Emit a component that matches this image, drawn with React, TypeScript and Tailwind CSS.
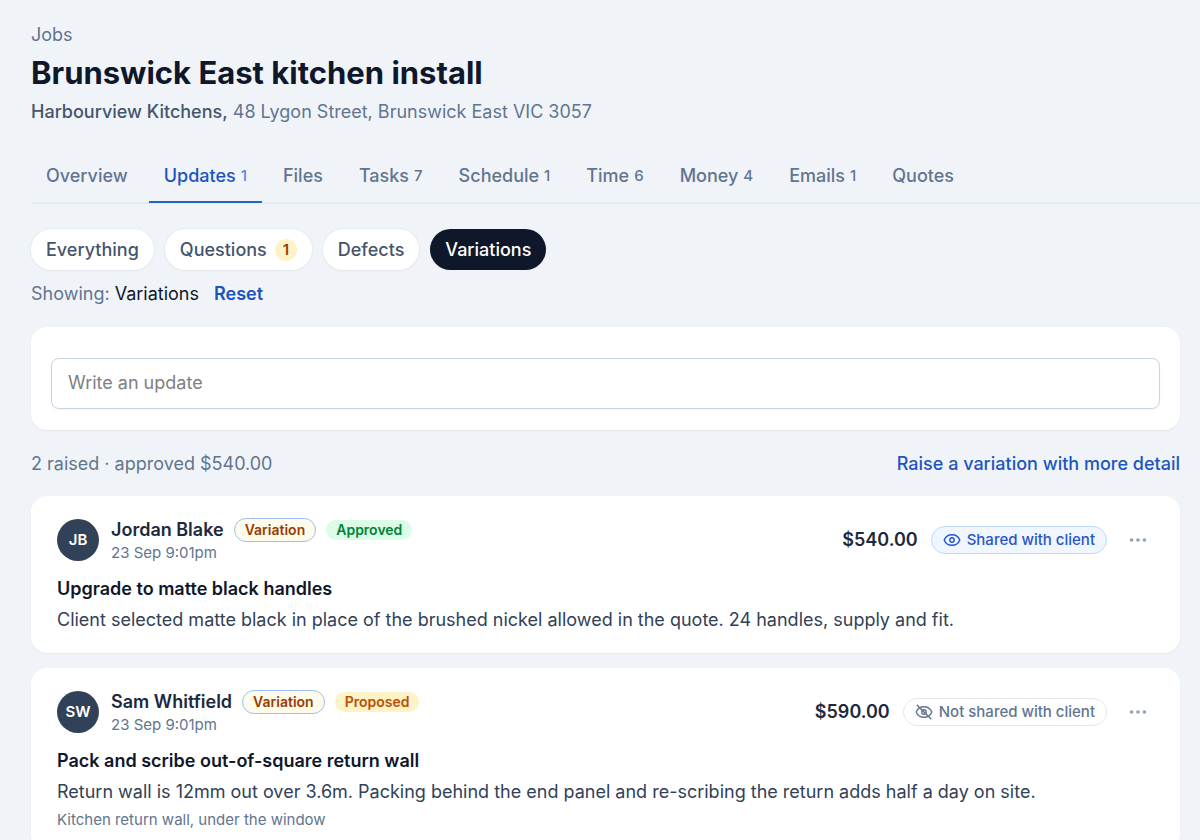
import React, { FC } from "react";
import { Ellipsis } from "lucide-react";
import clsx from "clsx";

interface Tab {
  label: string;
  count?: number;
}

interface Variation {
  initials: string;
  author: string;
  date: string;
  status: "Approved" | "Proposed";
  amount: string;
  shared: boolean;
  title: string;
  body: string;
  location?: string;
}

const tabs: Tab[] = [
  { label: "Overview" },
  { label: "Updates", count: 1 },
  { label: "Files" },
  { label: "Tasks", count: 7 },
  { label: "Schedule", count: 1 },
  { label: "Time", count: 6 },
  { label: "Money", count: 4 },
  { label: "Emails", count: 1 },
  { label: "Quotes" },
];

const filters: Tab[] = [
  { label: "Everything" },
  { label: "Questions", count: 1 },
  { label: "Defects" },
  { label: "Variations" },
];

const variations: Variation[] = [
  {
    initials: "JB",
    author: "Jordan Blake",
    date: "23 Sep 9:01pm",
    status: "Approved",
    amount: "$540.00",
    shared: true,
    title: "Upgrade to matte black handles",
    body: "Client selected matte black in place of the brushed nickel allowed in the quote. 24 handles, supply and fit.",
  },
  {
    initials: "SW",
    author: "Sam Whitfield",
    date: "23 Sep 9:01pm",
    status: "Proposed",
    amount: "$590.00",
    shared: false,
    title: "Pack and scribe out-of-square return wall",
    body: "Return wall is 12mm out over 3.6m. Packing behind the end panel and re-scribing the return adds half a day on site.",
    location: "Kitchen return wall, under the window",
  },
];

const JobTabs: FC = () => (
  <nav className="-mr-5 mt-[21px] flex gap-[6px] border-b-2 border-[#e6ebf1]">
    {tabs.map(({ label, count }) => {
      const active = label === "Updates";
      return (
        <a
          key={label}
          href="#"
          className={clsx(
            "-mb-px flex items-center gap-[5px] border-b-2 px-[15px] pt-[14px] pb-[11px] font-medium whitespace-nowrap",
            active ? "border-[#2563c4] text-[#1d55c0]" : "border-transparent text-slate-500"
          )}
        >
          {label}
          {count && (
            <span className={clsx("text-[15px] leading-6", active && "text-[#5b87e0]")}>{count}</span>
          )}
        </a>
      );
    })}
  </nav>
);

const Filters: FC = () => (
  <div className="mt-[25px] flex gap-[11px]">
    {filters.map(({ label, count }) => (
      <button
        key={label}
        className={clsx(
          "flex h-[41px] items-center gap-2 rounded-full px-[15px] font-medium",
          label === "Variations"
            ? "bg-slate-900 text-white"
            : "bg-white text-slate-600 shadow-xs ring-1 ring-slate-200/70"
        )}
      >
        {label}
        {count && (
          <span className="flex size-[22px] items-center justify-center rounded-full bg-amber-100 text-[15px] font-semibold text-amber-800">
            {count}
          </span>
        )}
      </button>
    ))}
  </div>
);

const EyeIcon: FC<{ crossed: boolean }> = ({ crossed }) => (
  <svg
    width="18"
    height="18"
    viewBox="0 0 18 18"
    fill="none"
    stroke="currentColor"
    strokeWidth="1.4"
    strokeLinecap="round"
    strokeLinejoin="round"
    aria-hidden="true"
  >
    <path d="M1.2 9C2.5 5.6 5.5 3.7 9 3.7S15.500 5.600 16.800 9C15.500 12.400 12.500 14.300 9 14.300S2.500 12.400 1.200 9Z" />
    <circle cx="9" cy="9" r="2.2" />
    {crossed && <path d="M2.200 2.200L15.800 15.800" />}
  </svg>
);

const SharePill: FC<{ shared: boolean }> = ({ shared }) => (
  <button
    className={clsx(
      "flex h-7 items-center gap-[6px] rounded-full border px-[11px] text-[15px] font-medium",
      shared ? "border-blue-200 bg-blue-50 text-[#2855c8]" : "border-slate-200 bg-white text-slate-500"
    )}
  >
    <EyeIcon crossed={!shared} />
    {shared ? "Shared with client" : "Not shared with client"}
  </button>
);

const VariationCard: FC<{ item: Variation }> = ({ item }) => (
  <article className="rounded-2xl bg-white px-[26px] pt-[21px] pb-[19px] shadow-xs">
    <div className="flex items-center justify-between">
      <div className="flex items-center gap-3">
        <div className="flex size-[42px] items-center justify-center rounded-full bg-slate-700 text-[15px] font-semibold text-white">
          {item.initials}
        </div>
        <div>
          <div className="flex h-[26px] items-center gap-[10px]">
            <span className="font-semibold text-slate-800">{item.author}</span>
            <span className="flex h-6 items-center rounded-full border border-[#9dbff2] bg-amber-50 px-[10px] text-sm font-semibold text-amber-800">
              Variation
            </span>
            <span
              className={clsx(
                "flex h-5 items-center rounded-full px-[10px] text-sm font-semibold",
                item.status === "Approved" ? "bg-green-100 text-green-700" : "bg-amber-100 text-amber-700"
              )}
            >
              {item.status}
            </span>
          </div>
          <div className="text-[15px] leading-5 text-slate-500">{item.date}</div>
        </div>
      </div>
      <div className="flex items-center">
        <span className="mr-[13px] font-semibold text-slate-800">{item.amount}</span>
        <SharePill shared={item.shared} />
        <button aria-label="More actions" className="ml-[15px] flex h-7 w-8 items-center justify-center text-slate-400">
          <Ellipsis size={22} />
        </button>
      </div>
    </div>
    <h2 className="mt-3 font-semibold text-slate-900">{item.title}</h2>
    <p className="mt-[3px] text-slate-700">{item.body}</p>
    {item.location && <p className="mt-[2px] text-[15px] leading-6 text-slate-500">{item.location}</p>}
  </article>
);

const App: FC = () => (
  <main className="min-h-screen overflow-hidden bg-[#f0f4f9] pt-[21px] pr-5 pb-6 pl-[31px] font-['Inter',sans-serif] text-lg leading-7">
    <header>
      <a href="#" className="text-slate-500">
        Jobs
      </a>
      <h1 className="text-[31px] leading-[48px] font-bold text-slate-900">Brunswick East kitchen install</h1>
      <p className="leading-[30px] text-slate-500">
        <span className="font-medium text-slate-600">Harbourview Kitchens,</span> 48 Lygon Street, Brunswick East VIC
        3057
      </p>
    </header>

    <JobTabs />
    <Filters />

    <div className="mt-[10px] flex text-slate-500">
      <p>
        Showing: <span className="text-slate-900">Variations</span>
      </p>
      <button className="ml-[15px] font-semibold text-[#1d55c0]">Reset</button>
    </div>

    <section className="mt-[19px] rounded-2xl bg-white px-5 pt-[31px] pb-[21px] shadow-xs">
      <input
        type="text"
        aria-label="Write an update"
        placeholder="Write an update"
        className="block h-[51px] w-full rounded-lg border border-slate-300 px-4 pb-[2px] shadow-xs placeholder:text-[#808080]"
      />
    </section>

    <div className="mt-5 flex justify-between">
      <p className="text-slate-500">2 raised · approved $540.00</p>
      <a href="#" className="font-medium text-[#1d55c0]">
        Raise a variation with more detail
      </a>
    </div>

    <div className="mt-[18px] flex flex-col gap-[15px]">
      {variations.map((item) => (
        <VariationCard key={item.author} item={item} />
      ))}
    </div>
  </main>
);

export default App;
